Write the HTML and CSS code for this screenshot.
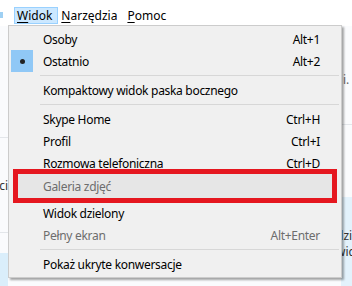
FILE: index.html
```html
<!DOCTYPE html>
<html lang="pl">
<head>
    <meta charset="UTF-8">
    <meta name="viewport" content="width=device-width, initial-scale=1.0">
    <title>Skype | Widok</title>
    <link rel="stylesheet" href="styles.css">
</head>
<body>
    <nav class="menubar">
        <span class="tab-edge"></span>
        <span class="menu-title active"><u>W</u>idok</span>
        <span class="menu-title"><u>N</u>arzędzia</span>
        <span class="menu-title"><u>P</u>omoc</span>
    </nav>

    <div class="content">
        <div class="pane left-pane">
            <div class="row h-111"></div>
            <div class="row h-95 bordered"><span class="clip">Wiadomości</span></div>
            <div class="row h-21 bordered"></div>
            <div class="row fill"></div>
        </div>
        <div class="pane right-pane">
            <div class="row h-99 text-top"><span class="lead">i. Cześć</span></div>
            <div class="row h-73 bordered"></div>
            <div class="row fill bubble">
                <span class="bubble-text">dzielony</span>
                <span class="bubble-text">widok</span>
            </div>
        </div>
    </div>

    <!-- rozwinięte menu Widok -->
    <div class="dropdown">
        <div class="item"><span>Osoby</span><span class="key">Alt+1</span></div>
        <div class="item checked"><span class="check"><i class="dot"></i></span><span>Ostatnio</span><span class="key">Alt+2</span></div>
        <div class="sep"></div>
        <div class="item"><span>Kompaktowy widok paska bocznego</span></div>
        <div class="sep"></div>
        <div class="item"><span>Skype Home</span><span class="key">Ctrl+H</span></div>
        <div class="item"><span>Profil</span><span class="key">Ctrl+I</span></div>
        <div class="item"><span>Rozmowa telefoniczna</span><span class="key">Ctrl+D</span></div>
        <div class="marked">
            <div class="item disabled hover"><span>Galeria zdjęć</span></div>
        </div>
        <div class="item after-mark"><span>Widok dzielony</span></div>
        <div class="item disabled"><span>Pełny ekran</span><span class="key">Alt+Enter</span></div>
        <div class="sep"></div>
        <div class="item"><span>Pokaż ukryte konwersacje</span></div>
    </div>
</body>
</html>
```

FILE: styles.css
```css
body {
    margin: 0;
    padding: 0;
    width: 352px;
    height: 286px;
    overflow: hidden;
    font-family: "Noto Sans", "Open Sans", sans-serif;
    font-size: 12px;
    color: #000;
    background: #fff;
}

.menubar {
    display: flex;
    align-items: flex-start;
    height: 26px;
    padding-top: 7px;
    box-sizing: border-box;
    background: #fff;
}
.tab-edge {
    width: 3px;
    height: 6px;
    margin-top: 5px;
    margin-right: 11px;
    background: #9fd0f3;
}
.menu-title {
    height: 17px;
    line-height: 16px;
    padding: 0 6px 0 2px;
    border: 1px solid transparent;
    box-sizing: border-box;
}
.menu-title u {
    text-decoration-thickness: 1px;
    text-underline-offset: 2px;
}
.menu-title.active {
    background: #cce8ff;
    border-color: #99d1ff;
    padding-right: 5px;
}

/* tło okna pod menu */
.content {
    display: flex;
    justify-content: space-between;
    height: 260px;
    background: #fafbfd;
}
.pane {
    display: flex;
    flex-direction: column;
    overflow: hidden;
}
.left-pane {
    width: 8px;
}
.right-pane {
    width: 11px;
}
.row {
    flex: none;
    display: flex;
    justify-content: flex-end;
    align-items: center;
    white-space: nowrap;
    color: #333;
}
.bordered {
    border-top: 1px solid #e3e6ea;
}
.h-111 { height: 111px; }
.h-95 { height: 94px; }
.h-21 { height: 20px; }
.h-99 { height: 98px; }
.h-73 { height: 72px; }
.fill {
    flex: 1;
    background: #daeefb;
}
.text-top {
    align-items: flex-start;
    justify-content: flex-start;
    padding-top: 45px;
    box-sizing: border-box;
}
.lead {
    color: #666;
    padding-left: 2px;
}
.bubble {
    flex-direction: column;
    align-items: flex-start;
    justify-content: flex-start;
    padding-top: 31px;
    background: #e3f2fc;
}
.bubble-text {
    line-height: 16px;
    margin-left: -5px;
}

/* menu rozwijane */
.dropdown {
    position: absolute;
    left: 8px;
    top: 25px;
    width: 334px;
    height: 253px;
    box-sizing: border-box;
    padding-top: 2px;
    border: 1px solid #cccccc;
    background: #f0f0f0;
    box-shadow: 2px 2px 2px rgba(0, 0, 0, 0.35);
    letter-spacing: -0.3px;
}
.item {
    position: relative;
    display: flex;
    justify-content: space-between;
    align-items: center;
    height: 22px;
    padding: 0 21px 0 34px;
}
.key {
    color: #000;
}
.check {
    position: absolute;
    left: 2px;
    top: 0;
    width: 22px;
    height: 22px;
    background: #90c8f6;
    display: flex;
    align-items: center;
    justify-content: center;
}
.dot {
    width: 5px;
    height: 5px;
    border-radius: 50%;
    background: #222;
}
.sep {
    height: 7px;
    display: flex;
    align-items: center;
    padding-left: 31px;
    padding-right: 2px;
}
.sep::before {
    content: "";
    flex: 1;
    height: 1px;
    background: #d7d7d7;
}
.disabled,
.disabled .key {
    color: #6d6d6d;
}
.marked {
    margin: -5px 4px 0 4px;
    border: 5px solid #e5171f;
}
.marked .item {
    height: 24px;
    padding-left: 25px;
    background: #e6e6e6;
}
.after-mark {
    margin-top: -1px;
}
```
